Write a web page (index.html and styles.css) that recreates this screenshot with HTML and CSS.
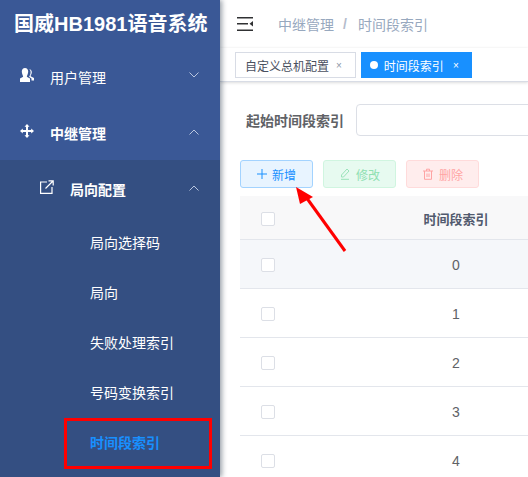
FILE: index.html
```html
<!DOCTYPE html>
<html lang="zh-CN">
<head>
    <meta charset="UTF-8">
    <meta name="viewport" content="width=device-width, initial-scale=1.0">
    <title>国威HB1981语音系统</title>
    <link rel="stylesheet" href="styles.css">
</head>
<body>
    <div class="app">
        <aside class="sidebar">
            <div class="logo">国威HB1981语音系统</div>
            <div class="menu-item">
                <svg class="menu-icon" width="14" height="16" viewBox="0 0 14 16"><path fill="#fff" d="M5 1c2 0 3.200 1.500 3.200 3.600S7 9 6.800 9.600c.2.800 2.200 1.300 3.200 2v3.400H0v-3.400c1-.7 3-1.200 3.200-2C3 9 1.800 6.700 1.800 4.600S3 1 5 1z"/><path fill="#fff" d="M9.300 2c1.700.3 2.500 1.700 2.500 3.200 0 1.400-.8 3-1.300 3.800.4.800 2.500 1 3.500 2v2.500h-2.500v-2c-.8-.9-2.200-1.200-2.400-2 .8-1 1.500-2.600 1.500-4.300 0-1.200-.5-2.200-1.300-3.200z"/></svg>
                <span>用户管理</span>
                <svg class="chevron" width="10" height="6" viewBox="0 0 10 6"><path fill="none" stroke="#b9c6df" stroke-width="1" d="M.5.5 5 5 9.500.5"/></svg>
            </div>
            <div class="menu-item menu-open">
                <svg class="menu-icon" width="14" height="14" viewBox="0 0 14 14"><path fill="#fff" d="M7 0l2.500 2.800H8v3.200h3.200V4.500L14 7l-2.800 2.500V8H8v3.200h1.500L7 14l-2.500-2.800H6V8H2.800v1.500L0 7l2.800-2.500V6H6V2.800H4.500z"/></svg>
                <span>中继管理</span>
                <svg class="chevron" width="10" height="6" viewBox="0 0 10 6"><path fill="none" stroke="#b9c6df" stroke-width="1" d="M.5 5.500 5 1l4.500 4.500"/></svg>
            </div>
            <div class="submenu">
                <div class="menu-item menu-open sub-title">
                    <svg class="menu-icon" width="14" height="14" viewBox="0 0 14 14"><path fill="none" stroke="#fff" stroke-width="1.200" d="M7 2H.6v11.400H12V7M5.500 8.500 13 1M8.500.8h4.700v4.700"/></svg>
                    <span>局向配置</span>
                    <svg class="chevron" width="10" height="6" viewBox="0 0 10 6"><path fill="none" stroke="#b9c6df" stroke-width="1" d="M.5 5.500 5 1l4.500 4.500"/></svg>
                </div>
                <div class="sub-item">局向选择码</div>
                <div class="sub-item">局向</div>
                <div class="sub-item">失败处理索引</div>
                <div class="sub-item">号码变换索引</div>
                <div class="sub-item active">时间段索引</div>
            </div>
        </aside>

        <main class="main">
            <div class="navbar">
                <svg class="hamburger" width="16" height="14" viewBox="0 0 16 14"><path fill="#303133" d="M0 0h16v1.500H0zM0 6h11v1.500H0zM0 12.500h16V14H0zM16 4v5.500L12.500 6.800z"/></svg>
                <span class="crumb">中继管理</span>
                <span class="crumb-sep">/</span>
                <span class="crumb">时间段索引</span>
            </div>
            <div class="tags">
                <div class="tag">自定义总机配置<span class="tag-close">×</span></div>
                <div class="tag tag-active"><i class="tag-dot"></i>时间段索引<span class="tag-close">×</span></div>
            </div>
            <div class="content">
                <div class="search-row">
                    <label class="search-label">起始时间段索引</label>
                    <div class="search-input"></div>
                </div>
                <div class="toolbar">
                    <div class="btn btn-add">
                        <svg width="10" height="10" viewBox="0 0 10 10"><path fill="none" stroke="#1890ff" d="M5 0v10M0 5h10"/></svg>
                        <span>新增</span>
                    </div>
                    <div class="btn btn-edit">
                        <svg width="12" height="12" viewBox="0 0 12 12"><path fill="none" stroke="#9be3ba" d="M8 1l2 2-5.500 6H2.500V7zM2 11.300h8"/></svg>
                        <span>修改</span>
                    </div>
                    <div class="btn btn-del">
                        <svg width="12" height="12" viewBox="0 0 12 12"><path fill="none" stroke="#ffa4a4" d="M1 3h10M4.500 3V1.200h3V3M2.500 3v8.300h7V3M5 5.500v3.500M7 5.500v3.500"/></svg>
                        <span>删除</span>
                    </div>
                </div>
                <div class="table">
                    <div class="row row-head"><div class="cell-check"><i class="checkbox"></i></div><div class="cell">时间段索引</div></div>
                    <div class="row row-hover"><div class="cell-check"><i class="checkbox"></i></div><div class="cell">0</div></div>
                    <div class="row"><div class="cell-check"><i class="checkbox"></i></div><div class="cell">1</div></div>
                    <div class="row"><div class="cell-check"><i class="checkbox"></i></div><div class="cell">2</div></div>
                    <div class="row"><div class="cell-check"><i class="checkbox"></i></div><div class="cell">3</div></div>
                    <div class="row"><div class="cell-check"><i class="checkbox"></i></div><div class="cell">4</div></div>
                </div>
            </div>
        </main>
    </div>

    <!-- annotation drawn on top of the screenshot -->
    <div class="mark-box"></div>
    <svg class="mark-arrow" width="60" height="75" viewBox="0 0 60 75"><path fill="none" stroke="#f00" stroke-width="3" d="M55 71 16 17"/><path fill="#f00" d="M6 7l4 17 13-7z"/></svg>
</body>
</html>
```

FILE: styles.css
```css
* {
    box-sizing: border-box;
}
html, body {
    margin: 0;
    height: 100%;
    overflow: hidden;
}
body {
    font-family: "Liberation Sans", "Noto Sans CJK SC", sans-serif;
    font-size: 14px;
    background-color: #fff;
    color: #606266;
}
.app {
    display: flex;
    height: 477px;
}

/* sidebar */
.sidebar {
    flex: 0 0 220px;
    background-color: #3a5896;
    color: #fff;
    box-shadow: 2px 0 5px rgba(0, 21, 41, .4);
    z-index: 2;
}
.logo {
    height: 48px;
    line-height: 48px;
    padding-left: 14px;
    font-size: 20px;
    font-weight: bold;
    white-space: nowrap;
}
.menu-item {
    display: flex;
    align-items: center;
    height: 56px;
    padding-left: 20px;
    padding-top: 1px;
    position: relative;
}
.menu-icon {
    flex: none;
    margin-right: 16px;
    margin-top: -1px;
    margin-bottom: 2px;
}
.menu-open span {
    font-weight: bold;
}
.chevron {
    position: absolute;
    left: 189px;
    top: 24px;
}
.menu-open .chevron {
    top: 25px;
}
.submenu {
    background-color: #344f82;
    height: 317px;
}
.sub-title {
    padding-left: 40px;
}
.sub-item {
    height: 50px;
    line-height: 54px;
    padding-left: 90px;
}
.sub-item.active {
    color: #1890ff;
    font-weight: bold;
}

/* top bars */
.main {
    flex: 1;
    min-width: 0;
    overflow: hidden;
}
.navbar {
    display: flex;
    align-items: center;
    height: 48px;
    padding-left: 17px;
    color: #97a8be;
}
.hamburger {
    margin-right: 25px;
}
.crumb-sep {
    width: 6px;
    margin: 0 9px;
    color: #b4bccc;
    font-weight: bold;
}
.tags {
    display: flex;
    gap: 5px;
    height: 34px;
    padding: 4px 0 0 15px;
    border-bottom: 1px solid #d8dce5;
    box-shadow: 0 1px 3px rgba(0, 0, 0, .12), 0 0 3px rgba(0, 0, 0, .04);
}
.tag {
    display: flex;
    align-items: center;
    height: 26px;
    padding: 0 13px 0 9px;
    border: 1px solid #d8dce5;
    font-size: 12px;
    color: #495060;
}
.tag-active {
    padding: 0 12px 0 8px;
    background-color: #1890ff;
    border-color: #1890ff;
    color: #fff;
}
.tag-dot {
    width: 8px;
    height: 8px;
    margin-right: 6px;
    border-radius: 50%;
    background-color: #fff;
}
.tag-close {
    margin-left: 7px;
    font-size: 10px;
    color: #8e97a8;
}
.tag-active .tag-close {
    margin-left: 9px;
    color: #fff;
}

/* search and buttons */
.content {
    padding: 22px 0 0 20px;
}
.search-row {
    display: flex;
    align-items: center;
    height: 32px;
    padding-left: 6px;
}
.search-label {
    width: 110px;
    font-weight: bold;
    flex: none;
}
.search-input {
    width: 300px;
    height: 32px;
    flex: none;
    border: 1px solid #dcdfe6;
    border-radius: 4px;
}
.toolbar {
    display: flex;
    gap: 10px;
    margin-top: 24px;
}
.btn {
    display: flex;
    align-items: center;
    justify-content: center;
    gap: 5px;
    width: 73px;
    height: 28px;
    border: 1px solid;
    border-radius: 3px;
    font-size: 12px;
}
.btn-add {
    background-color: #e8f4ff;
    border-color: #a3d3ff;
    color: #1890ff;
}
.btn-edit {
    background-color: #e7faf0;
    border-color: #d0f5e0;
    color: #8fe0b2;
}
.btn-del {
    background-color: #ffeded;
    border-color: #ffdbdb;
    color: #ffa4a4;
}

/* table */
.table {
    width: 380px;
    margin-top: 8px;
}
.row {
    display: flex;
    align-items: center;
    height: 49px;
    padding-top: 2px;
    border-bottom: 1px solid #e3e6ec;
}
.row-head {
    height: 44px;
    background-color: #f8f8f9;
    font-size: 13px;
    font-weight: bold;
    color: #515a6e;
}
.row-hover {
    background-color: #f5f7fa;
}
.cell-check {
    flex: 0 0 56px;
    display: flex;
    justify-content: center;
}
.cell {
    flex: 0 0 320px;
    text-align: center;
}
.checkbox {
    width: 14px;
    height: 14px;
    border: 1px solid #dcdfe6;
    border-radius: 2px;
    background-color: #fff;
}

/* annotation */
.mark-box {
    position: absolute;
    left: 64px;
    top: 418px;
    width: 148px;
    height: 51px;
    border: 3px solid #f00;
    z-index: 3;
}
.mark-arrow {
    position: absolute;
    left: 290px;
    top: 180px;
    z-index: 3;
}
```
